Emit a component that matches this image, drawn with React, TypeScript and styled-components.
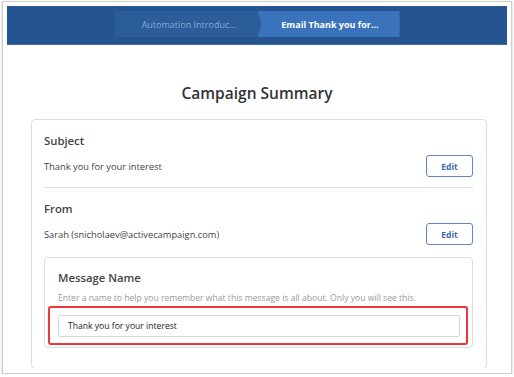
import React from 'react';
import styled, { createGlobalStyle } from 'styled-components';

const GlobalStyle = createGlobalStyle`
  body {
    margin: 0;
    background: #ffffff;
    font-family: "Open Sans", "Liberation Sans", sans-serif;
  }
`;

const sections = [
  { title: 'Subject', value: 'Thank you for your interest' },
  { title: 'From', value: 'Sarah (snicholaev@activecampaign.com)' },
];

const App: React.FC = () => {
  return (
    <>
      <GlobalStyle />
      <Window>
        <Viewport>
          <Header>
            <Breadcrumb>
              <Crumb>Automation Introduc...</Crumb>
              <Crumb active>Email Thank you for...</Crumb>
            </Breadcrumb>
          </Header>

          <Title>Campaign Summary</Title>

          <Card>
            {sections.map((section, i) => (
              <Section key={section.title} divided={i === 0}>
                <SectionTitle>{section.title}</SectionTitle>
                <Row>
                  <RowText>{section.value}</RowText>
                  <EditButton>Edit</EditButton>
                </Row>
                {i === 1 && (
                  <MessageBox>
                    <SectionTitle>Message Name</SectionTitle>
                    <Helper>
                      Enter a name to help you remember what this message is all about. Only you will see
                      this.
                    </Helper>
                    <NameInput defaultValue="Thank you for your interest" />
                    <Highlight />
                  </MessageBox>
                )}
              </Section>
            ))}
          </Card>
        </Viewport>
      </Window>
    </>
  );
};

const Window = styled.div`
  box-sizing: border-box;
  margin: 1px 0 0 2px;
  width: 510px;
  border: 1px solid #cfcfcf;
  padding: 4px 4px 5px 4px;
  background: #ffffff;
  box-shadow: 0 1px 2px rgba(0, 0, 0, 0.25);
`;

const Viewport = styled.div`
  width: 500px;
  height: 362px;
  overflow: hidden;
`;

const Header = styled.div`
  display: flex;
  justify-content: center;
  align-items: flex-start;
  height: 39px;
  padding-top: 5px;
  box-sizing: border-box;
  background: #245590;
  border-bottom: 1px solid #3f6ea8;
`;

const Breadcrumb = styled.div`
  display: flex;
  width: 285px;
  height: 26px;
  background: #2b5d9b;
`;

const Crumb = styled.div<{ active?: boolean }>`
  display: flex;
  align-items: center;
  justify-content: center;
  width: ${(p) => (p.active ? '142px' : '143px')};
  padding-left: ${(p) => (p.active ? '3px' : '6px')};
  box-sizing: border-box;
  font-size: 9px;
  font-weight: ${(p) => (p.active ? 700 : 400)};
  color: ${(p) => (p.active ? '#ffffff' : '#86a8d4')};
  background: ${(p) => (p.active ? '#3a73bb' : 'transparent')};
  clip-path: ${(p) => (p.active ? 'polygon(0 0, 100% 0, 100% 100%, 0 100%, 4px 50%)' : 'none')};
  white-space: nowrap;
`;

const Title = styled.h1`
  margin: 38px 0 16px;
  text-align: center;
  font-size: 15.5px;
  line-height: 20px;
  font-weight: 600;
  color: #333333;
`;

const Card = styled.div`
  margin-left: 24px;
  width: 456px;
  box-sizing: border-box;
  border: 1px solid #dcdcdc;
  border-radius: 4px;
  padding: 0 13px 0 12px;
`;

const Section = styled.div<{ divided?: boolean }>`
  padding: 12px 0 ${(p) => (p.divided ? '10px' : '20px')};
  border-bottom: ${(p) => (p.divided ? '1px solid #e2e2e2' : 'none')};
`;

const SectionTitle = styled.h3`
  margin: 0;
  font-size: 11.3px;
  line-height: 18px;
  font-weight: 600;
  color: #444444;
`;

const Row = styled.div`
  display: flex;
  align-items: center;
  justify-content: space-between;
  margin-top: 5px;
`;

const RowText = styled.span`
  font-size: 9.3px;
  color: #444444;
`;

const EditButton = styled.button`
  width: 47px;
  height: 22px;
  border: 1px solid #5d87c5;
  border-radius: 3px;
  background: #ffffff;
  font-family: inherit;
  font-size: 8.5px;
  font-weight: 700;
  color: #3b6bb3;
  padding: 0;
`;

const MessageBox = styled.div`
  position: relative;
  margin-top: 12px;
  border: 1px solid #dedede;
  border-radius: 4px;
  padding: 11px 12px 10px 13px;
`;

const Helper = styled.p`
  margin: 4px 0 0;
  font-size: 8.6px;
  line-height: 14px;
  color: #9a9a9a;
  white-space: nowrap;
`;

const NameInput = styled.input`
  display: block;
  box-sizing: border-box;
  width: 100%;
  height: 22px;
  margin-top: 10px;
  padding: 0 9px;
  border: 1px solid #d6d6d6;
  border-radius: 2px;
  font-family: inherit;
  font-size: 8.6px;
  color: #222222;
  outline: none;
`;

const Highlight = styled.div`
  position: absolute;
  left: 3px;
  top: 48px;
  width: 420px;
  height: 39px;
  box-sizing: border-box;
  border: 2.5px solid #e63a3c;
  border-radius: 3px;
  box-shadow: 0 0 1px rgba(230, 58, 60, 0.6);
  pointer-events: none;
`;

export default App;
